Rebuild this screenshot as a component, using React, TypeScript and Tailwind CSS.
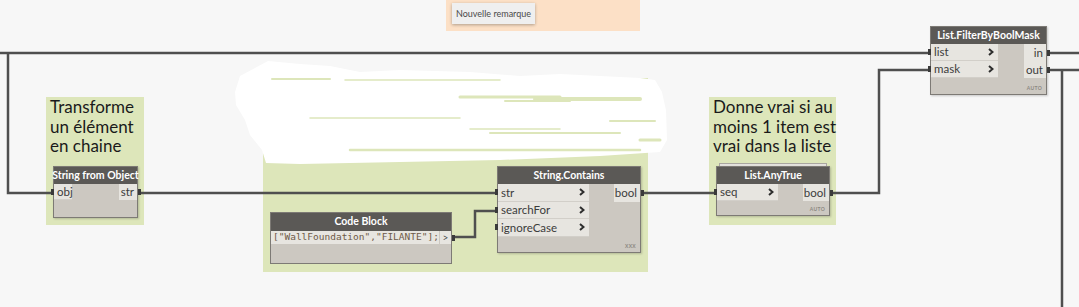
import React from "react";

type Port = { name: string; arrow?: boolean };

type NodeProps = {
  x: number;
  y: number;
  w: number;
  h: number;
  title: string;
  inputs: Port[];
  outputs: string[];
  inW: number;
  outW: number;
  rowH: number;
  footer?: string;
  stacked?: boolean;
};

const ui = { fontFamily: 'Lato, "Open Sans", sans-serif' };

function Node({ x, y, w, h, title, inputs, outputs, inW, outW, rowH, footer, stacked }: NodeProps) {
  return (
    <div className="absolute" style={{ left: x, top: y, width: w, height: h }}>
      {stacked && (
        <div className="absolute left-[3px] right-[3px] -top-[3px] h-[3px] border border-b-0 border-[#a9a6a0] bg-[#e4e2dd]" />
      )}
      <div className="relative flex h-full flex-col border border-[#7d7a75] bg-[#ccc8c1] shadow-[1px_1px_2px_rgba(0,0,0,0.2)]">
        <div
          className="flex h-[17px] shrink-0 items-center justify-center whitespace-nowrap bg-[#5b5956] text-[10.5px] font-bold text-white"
          style={ui}
        >
          {title}
        </div>
        <div className="flex flex-1 justify-between">
          <div className="flex flex-col" style={{ width: inW }}>
            {inputs.map((p) => (
              <div
                key={p.name}
                className="relative flex items-center justify-between border-b border-[#d2cfc9] bg-[#e7e5e0] pl-[3px] pr-[4px] text-[11.5px] text-[#3c3c3c]"
                style={{ height: rowH, ...ui }}
              >
                <span className="absolute -left-[3px] top-1/2 h-[6px] w-[3px] -translate-y-1/2 bg-[#3a3a3a]" />
                <span>{p.name}</span>
                {p.arrow !== false && (
                  <svg width="6" height="8" viewBox="0 0 6 8">
                    <path d="M1 1 L4.5 4 L1 7" fill="none" stroke="#2e2e2e" strokeWidth="2" />
                  </svg>
                )}
              </div>
            ))}
          </div>
          <div className="flex flex-col" style={{ width: outW }}>
            {outputs.map((o) => (
              <div
                key={o}
                className="relative flex items-center justify-end bg-[#e7e5e0] pr-[3px] text-[11.5px] text-[#3c3c3c]"
                style={{ height: rowH, ...ui }}
              >
                <span>{o}</span>
                <span className="absolute -right-[4px] top-1/2 h-[6px] w-[3px] -translate-y-1/2 bg-[#3a3a3a]" />
              </div>
            ))}
          </div>
        </div>
        {footer && (
          <div
            className="absolute bottom-[2px] right-[4px] text-[5px] font-bold tracking-[0.3px] text-[#8c8883]"
            style={ui}
          >
            {footer}
          </div>
        )}
      </div>
    </div>
  );
}

function Group({ x, y, w, h, lines }: { x: number; y: number; w: number; h: number; lines?: string[] }) {
  return (
    <div className="absolute bg-[#dde6ba]" style={{ left: x, top: y, width: w, height: h }}>
      {lines && (
        <div className="pl-[4px] text-[17px] leading-[19.5px] text-[#1a1a1a]" style={ui}>
          {lines.map((l) => (
            <div key={l} className="whitespace-nowrap">
              {l}
            </div>
          ))}
        </div>
      )}
    </div>
  );
}

export default function App() {
  return (
    <div className="relative h-[307px] w-[1079px] overflow-hidden bg-[#f7f7f7]">
      {/* note area */}
      <div className="absolute left-[446px] top-0 h-[31px] w-[194px] bg-[#fce0c6]">
        <div
          className="ml-[6px] mt-[3px] flex h-[21px] w-[83px] items-center justify-center bg-[#efefef] text-[9px] text-[#4a4a4a] shadow-[0_1px_3px_rgba(0,0,0,0.3)]"
          style={ui}
        >
          Nouvelle remarque
        </div>
      </div>

      <Group x={46} y={97} w={98} h={128} lines={["Transforme", "un élément", "en chaine"]} />
      <Group x={263} y={78} w={385} h={194} />
      <Group x={709} y={97} w={127} h={128} lines={["Donne vrai si au", "moins 1 item est", "vrai dans la liste"]} />

      {/* wires */}
      <svg className="absolute left-0 top-0" width="1079" height="307" viewBox="0 0 1079 307">
        <g fill="none" stroke="#4f4f4f" strokeWidth="2.5">
          <path d="M0 53 H930" />
          <path d="M8 53 V193 H53" />
          <path d="M137 193 H497" />
          <path d="M452 237 H475 V211 H497" />
          <path d="M641 193 H716" />
          <path d="M829 193 H879 V70 H930" />
          <path d="M1046 53 H1079" />
          <path d="M1046 70 H1079" />
          <path d="M1062 70 V307" />
        </g>
      </svg>

      <Node
        x={53}
        y={166}
        w={85}
        h={52}
        title="String from Object"
        inputs={[{ name: "obj", arrow: false }]}
        outputs={["str"]}
        inW={18}
        outW={18}
        rowH={16}
      />
      <Node
        x={497}
        y={166}
        w={144}
        h={87}
        title="String.Contains"
        inputs={[{ name: "str" }, { name: "searchFor" }, { name: "ignoreCase" }]}
        outputs={["bool"]}
        inW={91}
        outW={26}
        rowH={17.5}
        footer="XXX"
      />
      <Node
        x={716}
        y={166}
        w={114}
        h={50}
        title="List.AnyTrue"
        inputs={[{ name: "seq" }]}
        outputs={["bool"]}
        inW={61}
        outW={26}
        rowH={17}
        footer="AUTO"
        stacked
      />
      <Node
        x={930}
        y={26}
        w={117}
        h={69}
        title="List.FilterByBoolMask"
        inputs={[{ name: "list" }, { name: "mask" }]}
        outputs={["in", "out"]}
        inW={67}
        outW={22}
        rowH={17}
        footer="AUTO"
      />

      {/* code block */}
      <div className="absolute left-[270px] top-[212px] h-[52px] w-[182px]">
        <div className="flex h-full flex-col border border-[#7d7a75] bg-[#ccc8c1]">
          <div
            className="flex h-[18px] shrink-0 items-center justify-center bg-[#5b5956] text-[10.5px] font-bold text-white"
            style={ui}
          >
            Code Block
          </div>
          <div className="flex h-[13px] items-center">
            <div
              className="flex h-full flex-1 items-center bg-[#e7e5e0] pl-[2px] text-[9.5px] text-[#6e5a48]"
              style={{ fontFamily: '"DejaVu Sans Mono", "Liberation Mono", monospace' }}
            >
              ["WallFoundation","FILANTE"];
            </div>
            <div className="relative ml-[1px] flex h-full w-[12px] items-center justify-center bg-[#e7e5e0] text-[8px] text-[#333]">
              &gt;
              <span className="absolute -right-[4px] top-1/2 h-[6px] w-[3px] -translate-y-1/2 bg-[#3a3a3a]" />
            </div>
          </div>
        </div>
      </div>

      {/* redacted scribble */}
      <svg className="absolute left-0 top-0" width="1079" height="307" viewBox="0 0 1079 307">
        <path
          d="M240 76 L268 61 L300 64 L330 66 L360 72 L400 70 L470 72 L520 76 L560 74 L640 78 L655 80 L662 92 L666 110 L667 140 L660 152 L600 156 L500 160 L400 162 L300 164 L266 163 L262 150 L250 135 L245 120 L236 105 L235 92 Z"
          fill="#ffffff"
        />
        <g fill="none" stroke="#dde6ba" strokeLinecap="round">
          <path d="M272 79 H330" strokeWidth="2" />
          <path d="M345 80 H500" strokeWidth="1.5" />
          <path d="M460 97 H560" strokeWidth="3" />
          <path d="M505 101 H570" strokeWidth="2" />
          <path d="M535 99 H640" strokeWidth="4" />
          <path d="M310 118 H460" strokeWidth="1.5" />
          <path d="M490 133 H620" strokeWidth="2" />
          <path d="M470 129 H560" strokeWidth="1.5" />
          <path d="M350 150 H640" strokeWidth="2.5" />
          <path d="M610 121 H655" strokeWidth="2" />
          <path d="M640 140 H660" strokeWidth="3" />
        </g>
      </svg>
    </div>
  );
}
